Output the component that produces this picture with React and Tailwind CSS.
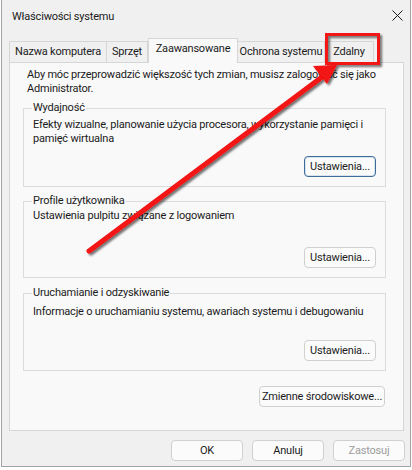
import React from 'react';

const font = { fontFamily: 'Roboto, "Liberation Sans", Arial, sans-serif' };

function Btn({ children, w = 'w-[72px]', focused = false, disabled = false }) {
    return (
        <button
            className={
                'h-[21px] rounded-[4px] text-[11px] tracking-[-0.2px] leading-none flex items-center justify-center whitespace-nowrap ' +
                w +
                (focused
                    ? ' border border-[#3f6c99] bg-[#fbfbfb] shadow-[inset_0_0_0_1px_#d7e3ee]'
                    : ' border border-[#d0d0d0] bg-[#fbfbfb]') +
                (disabled ? ' text-[#9d9d9d]' : ' text-[#1b1b1b]')
            }
        >
            {children}
        </button>
    );
}

function Group({ title, lines, textPad, btnGap, focused }) {
    return (
        <fieldset className="w-full min-w-0 border border-[#dcdcdc] pl-[8px] pr-[9px] pb-[9px] flex flex-col">
            <legend className="px-[1px] leading-[14px]">{title}</legend>
            <div className={'leading-[14px] pl-[1px] whitespace-nowrap ' + textPad}>
                {lines.map((l) => (
                    <div key={l}>{l}</div>
                ))}
            </div>
            <div className={'flex justify-end ' + btnGap}>
                <Btn w="w-[72px]" focused={focused}>Ustawienia...</Btn>
            </div>
        </fieldset>
    );
}

const tabs = [
    { label: 'Nazwa komputera', w: 'w-[98px]' },
    { label: 'Sprzęt', w: 'w-[42px]' },
    { label: 'Zaawansowane', w: 'w-[90px]', active: true },
    { label: 'Ochrona systemu', w: 'w-[88px]' },
    { label: 'Zdalny', w: 'w-[50px]' },
];

export default function App() {
    return (
        <div
            className="relative w-[412px] h-[470px] bg-white overflow-hidden text-[#1b1b1b] text-[11px] tracking-[-0.2px]"
            style={font}
        >
            <div className="ml-[1px] w-[410px] h-[467px] bg-[#f0f0f0] border-x border-b border-[#a3a3a3] flex flex-col">
                {/* Title bar */}
                <div className="h-[37px] flex items-start justify-between">
                    <span className="pl-[10px] pt-[10px] leading-[14px]">Właściwości systemu</span>
                    <svg width="11" height="11" viewBox="0 0 11 11" className="mt-[10px] mr-[7px]">
                        <path d="M0.5 0.5 L10.5 10.5 M10.5 0.5 L0.5 10.5" stroke="#1b1b1b" strokeWidth="1" />
                    </svg>
                </div>

                {/* Tabs */}
                <div className="h-[25px] flex items-end pl-[7px]">
                    {tabs.map((t) =>
                        t.active ? (
                            <div
                                key={t.label}
                                className={t.w + ' h-[25px] -mb-[1px] relative z-10 bg-[#f9f9f9] border-x border-t border-[#d6d6d6] flex items-center justify-center pb-[3px] whitespace-nowrap'}
                            >
                                {t.label}
                            </div>
                        ) : (
                            <div
                                key={t.label}
                                className={t.w + ' h-[21px] border-x border-t border-[#d6d6d6] -ml-px first:ml-0 flex items-center justify-center whitespace-nowrap overflow-hidden'}
                            >
                                {t.label}
                            </div>
                        )
                    )}
                </div>

                {/* Panel */}
                <div className="ml-[7px] w-[395px] h-[369px] bg-[#f9f9f9] border border-[#d6d6d6] pt-[5px] pl-[13px] pr-[17px] flex flex-col">
                    <p className="pl-[4px] leading-[14px] whitespace-nowrap">
                        Aby móc przeprowadzić większość tych zmian, musisz zalogować się jako
                        <br />
                        Administrator.
                    </p>
                    <div className="mt-[5px]">
                        <Group
                            title="Wydajność"
                            lines={['Efekty wizualne, planowanie użycia procesora, wykorzystanie pamięci i', 'pamięć wirtualna']}
                            textPad="pt-[3px]"
                            btnGap="mt-[10px]"
                            focused
                        />
                    </div>
                    <div className="mt-[7px]">
                        <Group
                            title="Profile użytkownika"
                            lines={['Ustawienia pulpitu związane z logowaniem']}
                            textPad="pt-[1px]"
                            btnGap="mt-[24px]"
                        />
                    </div>
                    <div className="mt-[8px]">
                        <Group
                            title="Uruchamianie i odzyskiwanie"
                            lines={['Informacje o uruchamianiu systemu, awariach systemu i debugowaniu']}
                            textPad="pt-[5px]"
                            btnGap="mt-[21px]"
                        />
                    </div>
                    <div className="mt-[15px] flex justify-end pr-[1px]">
                        <Btn w="w-[126px]">Zmienne środowiskowe...</Btn>
                    </div>
                </div>

                {/* Dialog buttons */}
                <div className="mt-[9px] flex justify-end gap-[9px] pr-[5px]">
                    <Btn>OK</Btn>
                    <Btn>Anuluj</Btn>
                    <Btn disabled>Zastosuj</Btn>
                </div>
            </div>

            {/* Annotation overlay */}
            <svg className="absolute inset-0 pointer-events-none" width="412" height="470" viewBox="0 0 412 470">
                <defs>
                    <filter id="sh" x="-20%" y="-20%" width="140%" height="140%">
                        <feDropShadow dx="2" dy="2" stdDeviation="1.2" floodColor="#000" floodOpacity="0.55" />
                    </filter>
                </defs>
                <g filter="url(#sh)">
                    <rect x="326.5" y="34.5" width="52" height="29" fill="none" stroke="#f21212" strokeWidth="3" />
                    <line x1="89" y1="251" x2="322" y2="77" stroke="#f21212" strokeWidth="5" strokeLinecap="round" />
                    <polygon points="337,65 327,84 313,66" fill="#f21212" />
                </g>
            </svg>
        </div>
    );
}
